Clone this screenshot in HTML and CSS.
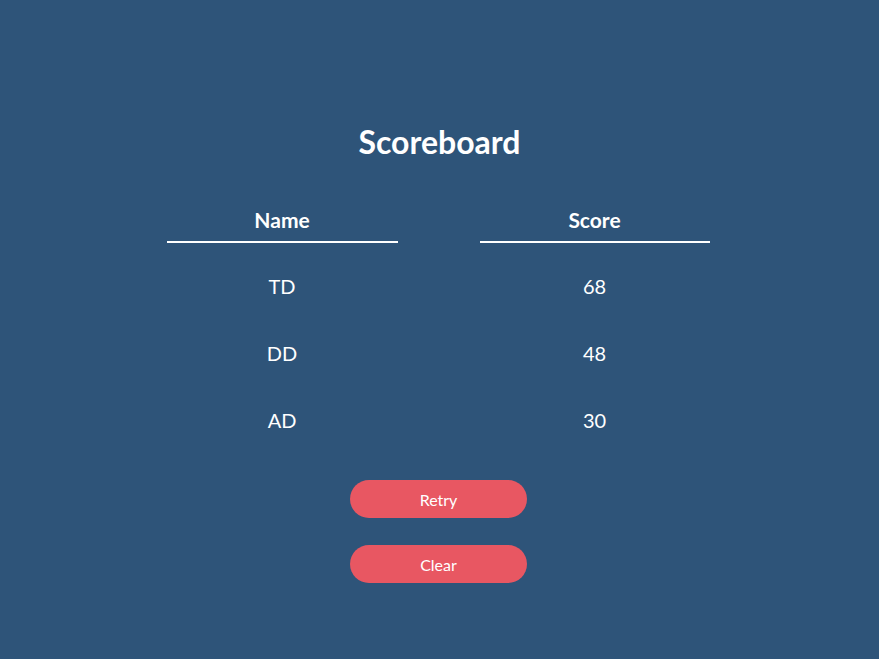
FILE: index.html
```html
<!DOCTYPE html>
<html lang="en">
<head>
<meta charset="utf-8">
<title>Scoreboard</title>
<link rel="stylesheet" href="styles.css">
</head>
<body>
<main class="page">
  <h1 class="title">Scoreboard</h1>
  <div class="board">
    <div class="head">Name</div>
    <div class="head">Score</div>
    <div class="cell">TD</div>
    <div class="cell">68</div>
    <div class="cell">DD</div>
    <div class="cell">48</div>
    <div class="cell">AD</div>
    <div class="cell">30</div>
  </div>
  <div class="actions">
    <button class="btn">Retry</button>
    <button class="btn">Clear</button>
  </div>
</main>
</body>
</html>
```
FILE: styles.css
```css
html, body {
  margin: 0;
  padding: 0;
  height: 100%;
}
body {
  background: #2e5479;
  color: #ffffff;
  font-family: Lato, "Open Sans", sans-serif;
}
.page {
  display: flex;
  flex-direction: column;
  align-items: center;
  padding-top: 123px;
}
.title {
  margin: 0;
  font-size: 32px;
  font-weight: 700;
  line-height: 38px;
}
.board {
  margin-top: 46px;
  display: grid;
  grid-template-columns: 231px 230px;
  column-gap: 82px;
  margin-left: -3px;
}
.head {
  text-align: center;
  font-size: 21px;
  font-weight: 700;
  line-height: 26px;
  padding-bottom: 8px;
  border-bottom: 2px solid #ffffff;
}
.cell {
  text-align: center;
  font-size: 20px;
  line-height: 26px;
  padding-top: 32px;
  padding-bottom: 9px;
}
.cell:nth-child(3), .cell:nth-child(4) {
  padding-top: 30px;
}
.actions {
  margin-top: 38px;
  display: flex;
  flex-direction: column;
  align-items: center;
  gap: 27px;
  margin-left: -2px;
}
.btn {
  width: 177px;
  height: 38px;
  border: none;
  border-radius: 19px;
  background: #e85762;
  color: #ffffff;
  font-family: Lato, "Open Sans", sans-serif;
  font-size: 16px;
  padding: 0;
}
```
